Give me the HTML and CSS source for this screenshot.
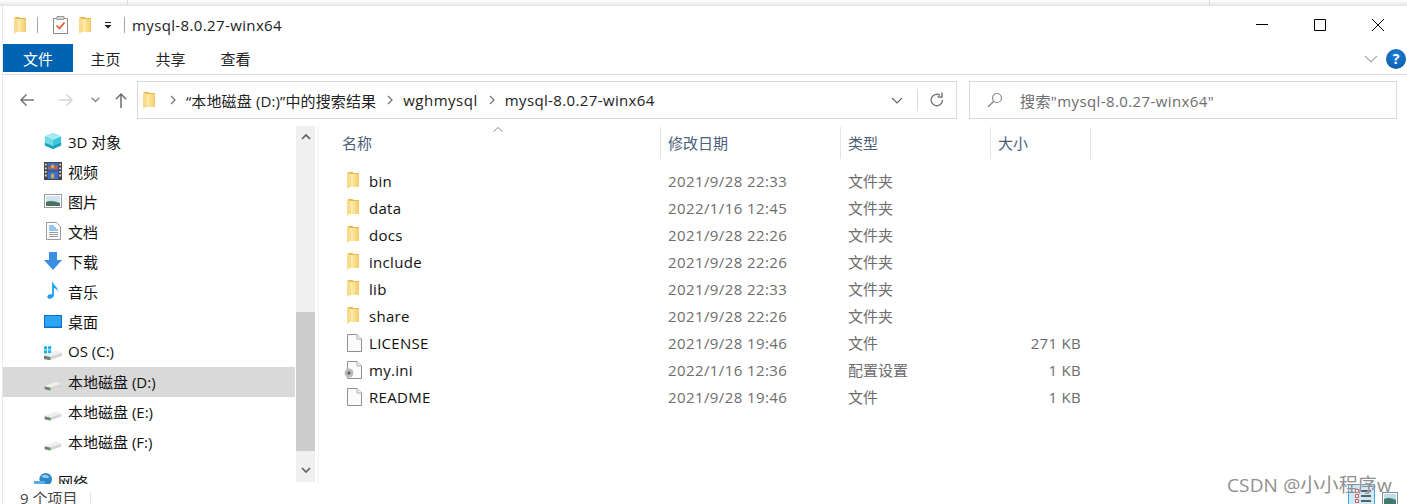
FILE: index.html
```html
<!DOCTYPE html>
<html lang="zh">
<head>
<meta charset="utf-8">
<title>mysql-8.0.27-winx64</title>
<link rel="stylesheet" href="styles.css">
</head>
<body>
<svg class="defs" width="0" height="0">
  <defs>
    <linearGradient id="fg" x1="0" y1="0" x2="1" y2="0"><stop offset="0" stop-color="#fff2bd"/><stop offset="1" stop-color="#f3cb66"/></linearGradient>
    <symbol id="folder" viewBox="0 0 12 17">
      <path d="M1 0h4.500l1 1H12v14H1z" fill="#e6b84e"/>
      <path d="M3 2h9v13H3.500z" fill="url(#fg)"/>
      <path d="M0 .5C2.500 1 3.500 1.500 3.500 3v11.500L0 17z" fill="#f8dc8c"/>
    </symbol>
    <symbol id="doc" viewBox="0 0 15 18">
      <path d="M.5.500h9.500l4.500 4.500v12.500H.5z" fill="#fbfbfb" stroke="#8f8f8f"/>
      <path d="M10 .5v4.500h4.500" fill="#f1f1f1" stroke="#b0b0b0"/>
    </symbol>
    <symbol id="drive" viewBox="0 0 20 12">
      <path d="M0 6L14 1l6 2.500v3L6.500 11.500 0 10z" fill="#d4d4d4"/>
      <path d="M0 6l7 1.500L20 3.500 14 1z" fill="#efefef"/>
      <path d="M0 6.500l7 1.500v3.500L0 10z" fill="#777"/>
      <rect x="3.500" y="8.500" width="3" height="1.500" fill="#35b34a"/>
    </symbol>
  </defs>
</svg>

<div class="screen">
  <div class="strip"><span class="strip-line"></span><span class="strip-line strip-line-right"></span></div>

  <div class="window">
    <header class="titlebar">
      <svg class="ico-folder qa-first"><use href="#folder"/></svg>
      <span class="qa-sep"></span>
      <svg class="qa-check" viewBox="0 0 15 18">
        <path d="M.5 2.500h14v15H.5z" fill="#fff" stroke="#8a8a8a"/>
        <path d="M4 .5h7v3H4z" fill="#d8d8d8" stroke="#9a9a9a"/>
        <path d="M3.500 9.500l3 3 5-6" fill="none" stroke="#e8562a" stroke-width="1.700"/>
      </svg>
      <svg class="ico-folder qa-second"><use href="#folder"/></svg>
      <svg class="qa-drop" viewBox="0 0 8 7"><path d="M1 .5h6" stroke="#222"/><path d="M.5 3h7L4 6.500z" fill="#222"/></svg>
      <span class="qa-sep qa-sep-b"></span>
      <span class="title">mysql-8.0.27-winx64</span>
      <div class="controls">
        <svg class="ctl" viewBox="0 0 12 12"><path d="M0 5.500h12" stroke="#000"/></svg>
        <svg class="ctl" viewBox="0 0 12 12"><path d="M.5.500h11v11H.5z" fill="none" stroke="#000"/></svg>
        <svg class="ctl" viewBox="0 0 12 12"><path d="M0 0l12 12M12 0L0 12" stroke="#000" fill="none"/></svg>
      </div>
    </header>

    <nav class="ribbon">
      <span class="tab tab-file">文件</span>
      <span class="tab">主页</span>
      <span class="tab">共享</span>
      <span class="tab">查看</span>
      <svg class="rib-chev" viewBox="0 0 14 8"><path d="M1 1l6 6 6-6" fill="none" stroke="#a9a9a9" stroke-width="1.100"/></svg>
      <span class="help">?</span>
    </nav>

    <div class="navrow">
      <svg class="nav-back" viewBox="0 0 16 14"><path d="M15 7H2M7.500 1.500L2 7l5.500 5.500" fill="none" stroke="#777" stroke-width="1.500"/></svg>
      <svg class="nav-fwd" viewBox="0 0 16 14"><path d="M1 7h13M8.500 1.500L14 7l-5.500 5.500" fill="none" stroke="#d6d6d6" stroke-width="1.500"/></svg>
      <svg class="nav-down" viewBox="0 0 9 6"><path d="M.7.700L4.500 4.500 8.300.700" fill="none" stroke="#888" stroke-width="1.400"/></svg>
      <svg class="nav-up" viewBox="0 0 12 16"><path d="M6 16V2M.8 7.200L6 2l5.200 5.200" fill="none" stroke="#6e6e6e" stroke-width="1.500"/></svg>
      <div class="address">
        <svg class="ico-folder"><use href="#folder"/></svg>
        <svg class="crumb-sep crumb-first" viewBox="0 0 6 10"><path d="M1 1l4 4-4 4" fill="none" stroke="#777" stroke-width="1.300"/></svg>
        <span class="crumb crumb-search">“本地磁盘 (D:)”中的搜索结果</span>
        <svg class="crumb-sep" viewBox="0 0 6 10"><path d="M1 1l4 4-4 4" fill="none" stroke="#777" stroke-width="1.300"/></svg>
        <span class="crumb crumb-mid">wghmysql</span>
        <svg class="crumb-sep" viewBox="0 0 6 10"><path d="M1 1l4 4-4 4" fill="none" stroke="#777" stroke-width="1.300"/></svg>
        <span class="crumb">mysql-8.0.27-winx64</span>
        <svg class="addr-chev" viewBox="0 0 12 7"><path d="M1 1l5 5 5-5" fill="none" stroke="#666" stroke-width="1.200"/></svg>
        <span class="addr-div"></span>
        <svg class="addr-refresh" viewBox="0 0 16 16"><path d="M13.500 8A5.700 5.700 0 1 1 11 3.300" fill="none" stroke="#777" stroke-width="1.400"/><path d="M13 .5v4.500H8.500" fill="none" stroke="#777" stroke-width="1.400"/></svg>
      </div>
      <div class="search">
        <svg class="search-ico" viewBox="0 0 16 16"><circle cx="10" cy="6" r="4.500" fill="none" stroke="#8a8a8a" stroke-width="1.200"/><path d="M6.700 9.300L1 15" stroke="#8a8a8a" stroke-width="1.500"/></svg>
        <span class="search-text">搜索"mysql-8.0.27-winx64"</span>
      </div>
    </div>

    <main class="body">
      <aside class="sidebar">
        <ul class="tree">
          <li class="node">
            <svg class="node-ico" viewBox="0 0 20 20"><path d="M10 1l9 4v10l-9 4-9-4V5z" fill="#3cc4d8"/><path d="M10 1l9 4-9 4-9-4z" fill="#a4ecf2"/><path d="M1 5l9 4v10l-9-4z" fill="#74dbe6"/><path d="M1 12l9 3.500 9-3.500v3l-9 4-9-4z" fill="#1ca3bd"/></svg>
            <span>3D 对象</span>
          </li>
          <li class="node">
            <svg class="node-ico" viewBox="0 0 20 20"><rect width="20" height="20" fill="#444"/><path d="M1 2v2h2V2zm0 4v2h2V6zm0 4v2h2v-2zm0 4v2h2v-2zm16-12v2h2V2zm0 4v2h2V6zm0 4v2h2v-2zm0 4v2h2v-2z" fill="#ddd"/><rect x="4" y="1" width="12" height="8.500" fill="#3c70c8"/><rect x="4" y="10.500" width="12" height="8.500" fill="#3c70c8"/><path d="M5 5h3v3H5zm6-1h4v4h-4z" fill="#d85a3c"/><path d="M8 3h3v4H8zm0 10h3v5H8z" fill="#e2b23e"/></svg>
            <span>视频</span>
          </li>
          <li class="node">
            <svg class="node-ico node-ico-pic" viewBox="0 0 18 14"><rect x=".5" y=".5" width="17" height="13" fill="#fff" stroke="#9a9a9a"/><rect x="2" y="2" width="14" height="10" fill="#cfe3f2"/><path d="M2 8c4-2 8-1 14 1v3H2z" fill="#47755f"/></svg>
            <span>图片</span>
          </li>
          <li class="node">
            <svg class="node-ico node-ico-doc" viewBox="0 0 15 18"><path d="M.5.500h10l4 4v13H.5z" fill="#fff" stroke="#9a9a9a"/><path d="M3 4h5M3 6h7M3 8h9" stroke="#2f8edc"/><path d="M3 10.500h9M3 12.500h9M3 14.500h9" stroke="#9c9c9c"/></svg>
            <span>文档</span>
          </li>
          <li class="node">
            <svg class="node-ico" viewBox="0 0 18 18"><path d="M5 0h8v8h5l-9 10L0 8h5z" fill="#3a8fe0"/></svg>
            <span>下载</span>
          </li>
          <li class="node">
            <svg class="node-ico" viewBox="0 0 18 20"><path d="M9 0c0 4 6 5 5 11-.5-3-3-4-4-4.500V15c0 3-5.500 5-7 2.500C2 15 5 13 8 14V0z" fill="#19a0f0"/></svg>
            <span>音乐</span>
          </li>
          <li class="node">
            <svg class="node-ico node-ico-desk" viewBox="0 0 18 13"><rect width="18" height="13" fill="#0f6fc6"/><path d="M1 1h16v10.500H1z" fill="#2aa6f4"/></svg>
            <span>桌面</span>
          </li>
          <li class="node">
            <svg class="node-ico node-ico-os" viewBox="0 0 20 16"><path d="M0 0h3.500v3.500H0zm4.500 0H8v3.500H4.500zM0 4.500h3.500V8H0zm4.500 0H8V8H4.500z" fill="#19b4ee"/><g transform="translate(0 4)"><use href="#drive" width="20" height="12"/></g></svg>
            <span>OS (C:)</span>
          </li>
          <li class="node node-selected">
            <svg class="node-ico node-ico-drive"><use href="#drive"/></svg>
            <span>本地磁盘 (D:)</span>
          </li>
          <li class="node">
            <svg class="node-ico node-ico-drive"><use href="#drive"/></svg>
            <span>本地磁盘 (E:)</span>
          </li>
          <li class="node">
            <svg class="node-ico node-ico-drive"><use href="#drive"/></svg>
            <span>本地磁盘 (F:)</span>
          </li>
          <li class="node node-net">
            <svg class="node-ico" viewBox="0 0 20 20"><circle cx="13" cy="8" r="7" fill="#2f86c9"/><path d="M8 5c3-3 8-2 9 1-3 1-6 1-9-1z" fill="#8fd0ee"/><path d="M0 10h12v8H0z" fill="#5aaee4"/></svg>
            <span>网络</span>
          </li>
        </ul>
        <div class="scrollbar">
          <svg class="sb-arrow sb-up" viewBox="0 0 10 6"><path d="M1 5l4-4 4 4" fill="none" stroke="#606060" stroke-width="1.700"/></svg>
          <span class="sb-thumb"></span>
          <svg class="sb-arrow sb-down" viewBox="0 0 10 6"><path d="M1 1l4 4 4-4" fill="none" stroke="#606060" stroke-width="1.700"/></svg>
        </div>
      </aside>

      <section class="files">
        <div class="cols">
          <span class="col col-name">名称<svg class="sort" viewBox="0 0 10 5"><path d="M.5 4.500L5 .5l4.500 4" fill="none" stroke="#8a8a8a"/></svg></span>
          <span class="col">修改日期</span>
          <span class="col">类型</span>
          <span class="col">大小</span>
        </div>
        <ul class="rows">
          <li class="row"><span class="f-name"><svg class="ico-folder"><use href="#folder"/></svg>bin</span><span class="f-date">2021/9/28 22:33</span><span class="f-type">文件夹</span><span class="f-size"></span></li>
          <li class="row"><span class="f-name"><svg class="ico-folder"><use href="#folder"/></svg>data</span><span class="f-date">2022/1/16 12:45</span><span class="f-type">文件夹</span><span class="f-size"></span></li>
          <li class="row"><span class="f-name"><svg class="ico-folder"><use href="#folder"/></svg>docs</span><span class="f-date">2021/9/28 22:26</span><span class="f-type">文件夹</span><span class="f-size"></span></li>
          <li class="row"><span class="f-name"><svg class="ico-folder"><use href="#folder"/></svg>include</span><span class="f-date">2021/9/28 22:26</span><span class="f-type">文件夹</span><span class="f-size"></span></li>
          <li class="row"><span class="f-name"><svg class="ico-folder"><use href="#folder"/></svg>lib</span><span class="f-date">2021/9/28 22:33</span><span class="f-type">文件夹</span><span class="f-size"></span></li>
          <li class="row"><span class="f-name"><svg class="ico-folder"><use href="#folder"/></svg>share</span><span class="f-date">2021/9/28 22:26</span><span class="f-type">文件夹</span><span class="f-size"></span></li>
          <li class="row"><span class="f-name"><svg class="ico-file"><use href="#doc"/></svg>LICENSE</span><span class="f-date">2021/9/28 19:46</span><span class="f-type">文件</span><span class="f-size">271 KB</span></li>
          <li class="row"><span class="f-name"><svg class="ico-ini" viewBox="0 0 18 18"><use href="#doc" x="3" width="15" height="18"/><circle cx="5" cy="12" r="4.500" fill="#bdbdbd"/><circle cx="5" cy="12" r="1.700" fill="#666"/></svg>my.ini</span><span class="f-date">2022/1/16 12:36</span><span class="f-type">配置设置</span><span class="f-size">1 KB</span></li>
          <li class="row"><span class="f-name"><svg class="ico-file"><use href="#doc"/></svg>README</span><span class="f-date">2021/9/28 19:46</span><span class="f-type">文件</span><span class="f-size">1 KB</span></li>
        </ul>
      </section>
    </main>

    <footer class="status">
      <span class="status-text">9 个项目</span>
      <span class="status-sep"></span>
      <div class="views">
        <svg class="view-list" viewBox="0 0 27 21"><rect x=".5" y=".5" width="26" height="22" fill="#cde8f7" stroke="#4ba6dc"/><path d="M7.500 5.500h3v3h-3zm0 5h3v3h-3zm0 5h3v3h-3z" fill="#fff" stroke="#c55"/><path d="M13 7h10M13 12h10M13 17h10" stroke="#333" stroke-width="1.300"/></svg>
        <svg class="view-pic" viewBox="0 0 16 12"><rect x=".5" y=".5" width="15" height="13" fill="#fff" stroke="#8a8a8a"/><rect x="2" y="2" width="12" height="10" fill="#bcdcf0"/><path d="M2 7c4-2 8-1 12 1v4H2z" fill="#3f7a6a"/></svg>
      </div>
    </footer>
  </div>

  <div class="watermark">CSDN @小小程序w</div>
</div>
</body>
</html>
```

FILE: styles.css
```css
* { box-sizing: border-box; }
html, body { margin: 0; padding: 0; background: #fff; }
body {
  font-family: "Open Sans", "Noto Sans CJK SC", sans-serif;
  font-size: 15px;
  color: #111;
}
ul { list-style: none; margin: 0; padding: 0; }
svg { display: block; flex: none; }
.defs { position: absolute; }

.screen {
  position: relative;
  width: 1407px;
  height: 504px;
  overflow: hidden;
  background: #fff;
}

.strip {
  height: 6px;
  background: linear-gradient(#ffffff, #e4e4e4);
  display: flex;
  padding-left: 127px;
}
.strip-line { width: 1px; height: 6px; background: #dcdcdc; }
.strip-line-right { margin-left: 1081px; }

.window {
  height: 498px;
  margin-left: 2px;
  border-left: 1px solid #e8e8e8;
  display: flex;
  flex-direction: column;
}

.titlebar {
  height: 38px;
  display: flex;
  align-items: center;
  padding-left: 11px;
}
.ico-folder { width: 12px; height: 17px; }
.qa-first { margin-right: 11px; }
.qa-sep { width: 1px; height: 16px; background: #a5a5a5; }
.qa-check { width: 15px; height: 18px; margin-left: 15px; }
.qa-second { margin-left: 11px; }
.qa-drop { width: 8px; height: 7px; margin-left: 13px; }
.qa-sep-b { margin-left: 12px; }
.title { margin-left: 7px; color: #222; letter-spacing: .37px; }
.controls {
  margin-left: auto;
  display: flex;
  align-items: center;
  gap: 46px;
  padding-right: 23px;
}
.ctl { width: 12px; height: 12px; }

.ribbon {
  height: 31px;
  display: flex;
  align-items: flex-start;
  border-bottom: 1px solid #dadbdc;
}
.tab {
  height: 28px;
  line-height: 30px;
  width: 65px;
  text-align: center;
  color: #222;
}
.tab-file { width: 70px; background: #0063b1; color: #fff; }
.rib-chev { width: 14px; height: 8px; margin: 11px 0 0 auto; }
.help {
  width: 20px;
  height: 20px;
  margin: 5px 1px 0 8px;
  border-radius: 50%;
  background: radial-gradient(circle at 50% 35%, #1e7fd6, #0a55a6);
  color: #fff;
  font-weight: 700;
  font-size: 14px;
  line-height: 20px;
  text-align: center;
}

.navrow {
  height: 51px;
  display: flex;
  align-items: center;
  padding-bottom: 1px;
  padding-left: 16px;
}
.nav-back { width: 16px; height: 14px; }
.nav-fwd { width: 16px; height: 14px; margin-left: 23px; }
.nav-down { width: 9px; height: 6px; margin-left: 17px; }
.nav-up { width: 12px; height: 16px; margin-left: 15px; }
.address {
  width: 820px;
  height: 38px;
  margin-left: 10px;
  border: 1px solid #d9d9d9;
  display: flex;
  align-items: center;
  padding-left: 5px;
}
.crumb-sep { width: 6px; height: 10px; margin: 0 10px 0 11px; }
.crumb-first { margin-left: 15px; margin-right: 10px; }
.crumb { white-space: nowrap; color: #222; letter-spacing: .37px; }
.crumb-search { letter-spacing: .13px; }
.crumb-mid { letter-spacing: .5px; }
.addr-chev { width: 12px; height: 7px; margin-left: auto; }
.addr-div { width: 1px; height: 22px; background: #dcdcdc; margin: 0 11px 0 14px; }
.addr-refresh { width: 16px; height: 16px; margin-right: 11px; }
.search {
  width: 428px;
  height: 38px;
  margin-left: 12px;
  border: 1px solid #d9d9d9;
  display: flex;
  align-items: center;
  padding-left: 17px;
}
.search-ico { width: 16px; height: 16px; }
.search-text { margin-left: 17px; color: #6d6d6d; letter-spacing: .4px; }

.body {
  flex: 1;
  min-height: 0;
  display: flex;
  overflow: hidden;
}

.sidebar {
  width: 316px;
  display: flex;
  border-right: 1px solid #f0f0f0;
  padding-right: 3px;
  flex: none;
  overflow: hidden;
}
.tree { width: 292px; flex: none; margin-top: 1px; }
.node {
  height: 30px;
  display: flex;
  align-items: center;
  padding: 0 0 2px 41px;
  color: #111;
  white-space: nowrap;
}
.node span { margin-left: 6px; }
.node-selected { background: #d9d9d9; }
.node-net { padding-left: 31px; margin-top: 10px; }
.node-ico { width: 18px; height: 18px; }
.node-ico-pic { height: 14px; }
.node-ico-doc { width: 15px; margin-left: 2px; margin-right: 1px; }
.node-ico-desk { height: 13px; }
.node-ico-os { height: 15px; margin-top: 5px; }
.node-ico-drive { height: 10px; margin-top: 10px; }
.scrollbar {
  width: 20px;
  margin-left: 1px;
  background: #f0f0f0;
  display: flex;
  flex-direction: column;
  align-items: center;
  height: 356px;
  position: relative;
}
.sb-arrow { width: 10px; height: 6px; }
.sb-up { margin-top: 8px; }
.sb-down { margin-top: auto; margin-bottom: 9px; }
.sb-thumb {
  position: absolute;
  top: 186px;
  left: 0;
  width: 19px;
  height: 139px;
  background: #cdcdcd;
}

.files { flex: 1; min-width: 0; }
.cols {
  height: 40px;
  display: grid;
  grid-template-columns: 342px 180px 150px 100px;
  margin-top: 1px;
}
.col {
  display: flex;
  align-items: center;
  position: relative;
  padding: 0 0 1px 7px;
  color: #4c607a;
  height: 32px;
  border-right: 1px solid #e5e5e5;
}
.col-name { padding-left: 23px; }
.sort { position: absolute; top: 0; left: 174px; width: 10px; height: 5px; }

.row {
  height: 27px;
  display: grid;
  grid-template-columns: 341px 180px 150px 91px;
  align-items: center;
  color: #6d6d6d;
}
.f-name {
  display: flex;
  align-items: center;
  padding-left: 28px;
  color: #111;
  letter-spacing: .3px;
}
.f-name svg { margin-right: 10px; }
.f-name .ico-file { width: 15px; height: 18px; margin-right: 7px; }
.f-name .ico-ini { width: 18px; height: 18px; margin-left: -3px; margin-right: 7px; }
.f-date { padding-left: 8px; letter-spacing: .4px; }
.f-type { padding: 0 0 1px 8px; }
.f-size { text-align: right; letter-spacing: .3px; }

.status {
  height: 20px;
  flex: none;
  display: flex;
  align-items: flex-start;
  padding-left: 17px;
  color: #444;
  background: #fff;
}
.status-text { line-height: 20px; margin-top: 4px; }
.status-sep { width: 1px; height: 12px; margin: 8px 0 0 13px; background: #e2e2e2; }
.views {
  margin-left: auto;
  display: flex;
  align-items: flex-start;
  gap: 7px;
  padding-right: 9px;
}
.view-list { width: 27px; height: 21px; }
.view-pic { width: 16px; height: 12px; margin-top: 8px; }

.watermark {
  position: absolute;
  left: 1227px;
  top: 472px;
  font-size: 19px;
  line-height: 26px;
  letter-spacing: .15px;
  color: #8f8f8f;
  white-space: nowrap;
  text-shadow: 0 0 1px #fff;
}
```
